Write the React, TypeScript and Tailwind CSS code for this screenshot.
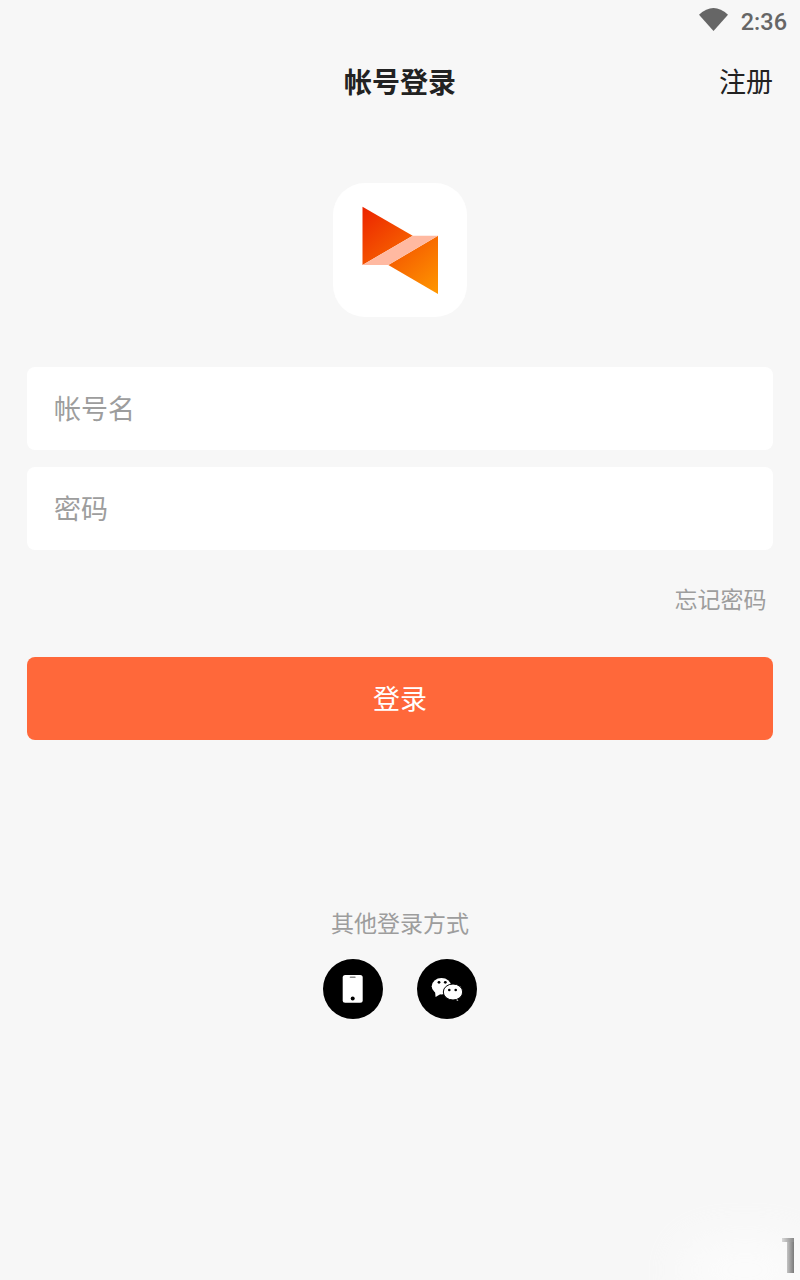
import React from "react";

const cjk = { fontFamily: '"Noto Sans CJK SC", "Noto Sans", sans-serif' };

function Logo() {
  return (
    <svg width="134" height="134" viewBox="0 0 134 134">
      <defs>
        <linearGradient id="g1" gradientUnits="userSpaceOnUse" x1="29.5" y1="23.7" x2="105" y2="111">
          <stop offset="0" stopColor="#ec2300" />
          <stop offset="1" stopColor="#ff9800" />
        </linearGradient>
      </defs>
      <polygon points="29.5,23.7 79.7,52.7 29.5,82" fill="url(#g1)" />
      <polygon points="105,52.7 105,111 55.3,82" fill="url(#g1)" />
      <polygon points="79.7,52.7 105,52.7 55.3,82 29.5,82" fill="#ffb9a1" />
    </svg>
  );
}

function PhoneIcon() {
  return (
    <svg width="60" height="60" viewBox="0 0 60 60">
      <circle cx="30" cy="30" r="30" fill="#000" />
      <rect x="19.7" y="16" width="20" height="27.8" rx="2.5" fill="#fff" />
      <rect x="26.7" y="17.6" width="6" height="1.4" rx="0.7" fill="#8a8a8a" />
      <circle cx="29.7" cy="39.4" r="2" fill="#000" />
    </svg>
  );
}

function WechatIcon() {
  return (
    <svg width="60" height="60" viewBox="0 0 60 60">
      <circle cx="30" cy="30" r="30" fill="#000" />
      <path d="M18 32l0.6 6 5-3z" fill="#fff" />
      <ellipse cx="24.5" cy="27.2" rx="9.8" ry="8.2" fill="#fff" />
      <circle cx="22" cy="23.3" r="1.4" fill="#000" />
      <circle cx="28.3" cy="23.3" r="1.4" fill="#000" />
      <path d="M39 37l2.4 5-6-2.5z" fill="#fff" />
      <ellipse cx="36" cy="33" rx="9.7" ry="8" fill="#fff" stroke="#000" strokeWidth="1" />
      <circle cx="32.3" cy="31" r="1.3" fill="#000" />
      <circle cx="38.7" cy="31" r="1.3" fill="#000" />
    </svg>
  );
}

export default function App() {
  return (
    <div className="relative flex h-[1280px] w-[800px] flex-col overflow-hidden bg-[#f7f7f7]" style={cjk}>
      <div className="flex h-[42px] items-start justify-end pr-[13px] pt-[8px]">
        <svg width="29" height="23" viewBox="0 0 29 23" className="mr-[13px]">
          <path d="M0 6.7Q14.5 -6.7 29 6.7L14.5 23Z" fill="#666" />
        </svg>
        <span className="mt-[2px] text-[23.5px] font-medium leading-[24px] text-[#666]" style={{ fontFamily: "Roboto, sans-serif" }}>
          2:36
        </span>
      </div>

      <div className="relative flex h-[80px] items-center justify-center pb-[2px]">
        <span className="text-[28px] font-bold text-[#222]">帐号登录</span>
        <span className="absolute right-[27px] text-[27px] text-[#222]">注册</span>
      </div>

      <div className="mt-[61px] flex justify-center">
        <div className="h-[134px] w-[134px] rounded-[32px] bg-white">
          <Logo />
        </div>
      </div>

      <div className="mt-[50px] flex flex-col gap-[17px] px-[27px]">
        <div className="flex h-[83px] items-center rounded-[8px] bg-white pl-[27px] text-[27px] text-[#9d9d9d]">帐号名</div>
        <div className="flex h-[83px] items-center rounded-[8px] bg-white pl-[27px] text-[27px] text-[#9d9d9d]">密码</div>
      </div>

      <div className="mt-[32px] flex h-[32px] items-center justify-end pr-[33.5px] text-[23px] text-[#9d9d9d]">忘记密码</div>

      <div className="mx-[27px] mt-[43px] flex h-[83px] items-center justify-center rounded-[8px] bg-[#ff683a] pb-[1px] text-[27px] text-white">
        登录
      </div>

      <div className="mt-[166px] flex h-[32px] items-center justify-center text-[23px] text-[#9d9d9d]">其他登录方式</div>

      <div className="mt-[21px] flex justify-center gap-[34px]">
        <PhoneIcon />
        <WechatIcon />
      </div>

      <div className="absolute -bottom-[20px] -right-[10px] h-[60px] w-[130px] rounded-full bg-white opacity-60 blur-xl" />
      <div className="absolute bottom-[7px] right-[6px] h-[35px] w-[7px] bg-gradient-to-r from-[#c4c4c4] to-[#7a7a7a]" />
      <div className="absolute bottom-[38px] right-[6px] h-[4px] w-[12px] bg-gradient-to-r from-[#d8d8d8] to-[#888]" />
    </div>
  );
}
